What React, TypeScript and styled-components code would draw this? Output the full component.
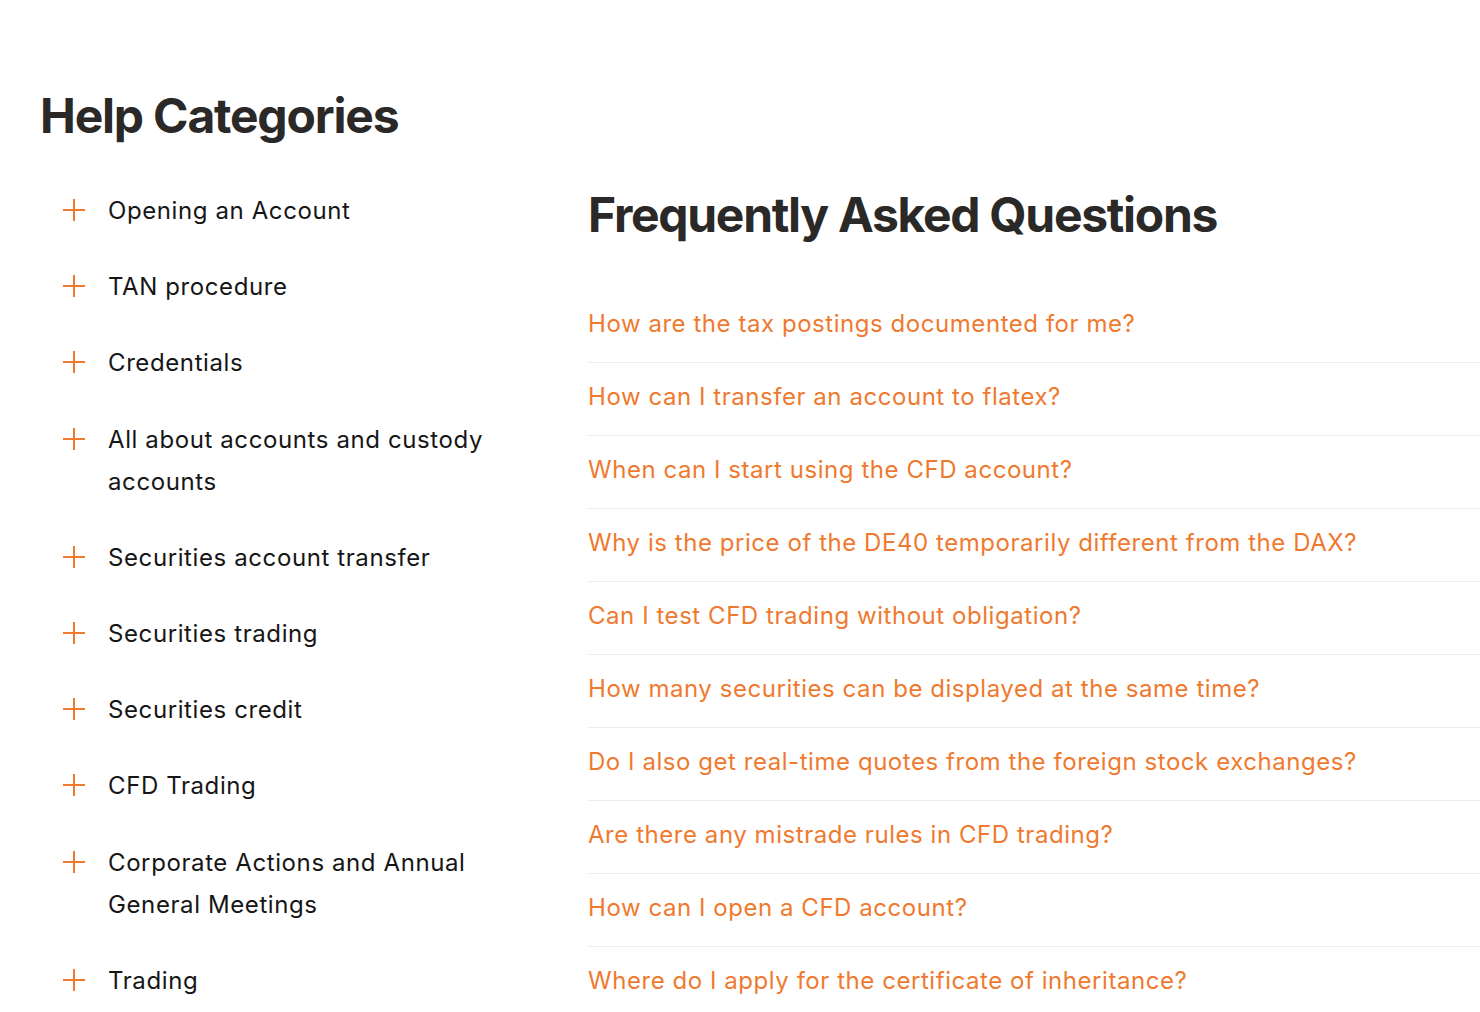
import React from 'react';
import styled, { createGlobalStyle } from 'styled-components';

const GlobalStyle = createGlobalStyle`
  html, body {
    margin: 0;
    padding: 0;
    background: #ffffff;
  }
  body {
    font-family: Inter, "Noto Sans", "Liberation Sans", sans-serif;
    -webkit-font-smoothing: antialiased;
  }
`;

const ORANGE = '#ef7a2f';

const Page = styled.div`
  width: 1480px;
  padding: 84px 0 0 40px;
  box-sizing: border-box;
  overflow: hidden;
`;

const PageTitle = styled.h1`
  margin: 0;
  font-size: 48px;
  line-height: 64px;
  font-weight: 700;
  color: #2b2927;
  letter-spacing: -1.2px;
`;

const Columns = styled.div`
  display: grid;
  grid-template-columns: 548px 1fr;
  margin-top: 40px;
`;

const CategoryList = styled.ul`
  list-style: none;
  margin: 0;
  padding: 2px 40px 0 22px;
  display: flex;
  flex-direction: column;
  gap: 34.2px;
`;

const CategoryItem = styled.li`
  display: flex;
  align-items: flex-start;
  gap: 22px;
  font-size: 24px;
  line-height: 42px;
  letter-spacing: 0.6px;
  color: #161616;
  cursor: pointer;

  & > span {
    max-width: 420px;
  }
`;

const PlusIcon = styled.svg`
  flex: none;
  width: 24px;
  height: 24px;
  margin-top: 8px;
`;

const FaqSection = styled.section`
  display: flex;
  flex-direction: column;
`;

const FaqTitle = styled.h2`
  margin: -3px 0 0;
  font-size: 48px;
  line-height: 60px;
  font-weight: 700;
  color: #2b2927;
  letter-spacing: -1.3px;
`;

const FaqList = styled.ul`
  list-style: none;
  margin: 45px 0 0;
  padding: 0;
`;

const FaqItem = styled.li<{ $last?: boolean }>`
  padding: 17px 0 21px;
  border-bottom: 1px solid ${(p) => (p.$last ? 'transparent' : '#ececec')};
`;

const FaqLink = styled.a`
  font-size: 24px;
  line-height: 34px;
  letter-spacing: 0.55px;
  color: ${ORANGE};
  text-decoration: none;
  cursor: pointer;
`;

const categories = [
  'Opening an Account',
  'TAN procedure',
  'Credentials',
  'All about accounts and custody accounts',
  'Securities account transfer',
  'Securities trading',
  'Securities credit',
  'CFD Trading',
  'Corporate Actions and Annual General Meetings',
  'Trading',
];

const questions = [
  'How are the tax postings documented for me?',
  'How can I transfer an account to flatex?',
  'When can I start using the CFD account?',
  'Why is the price of the DE40 temporarily different from the DAX?',
  'Can I test CFD trading without obligation?',
  'How many securities can be displayed at the same time?',
  'Do I also get real-time quotes from the foreign stock exchanges?',
  'Are there any mistrade rules in CFD trading?',
  'How can I open a CFD account?',
  'Where do I apply for the certificate of inheritance?',
];

const Plus = () => (
  <PlusIcon viewBox="0 0 24 24" fill="none" stroke={ORANGE} strokeWidth={2}>
    <path d="M12 1v22M1 12h22" />
  </PlusIcon>
);

const App = () => {
  return (
    <Page>
      <GlobalStyle />
      <PageTitle>Help Categories</PageTitle>
      <Columns>
        <CategoryList>
          {categories.map((c) => (
            <CategoryItem key={c}>
              <Plus />
              <span>{c}</span>
            </CategoryItem>
          ))}
        </CategoryList>
        <FaqSection>
          <FaqTitle>Frequently Asked Questions</FaqTitle>
          <FaqList>
            {questions.map((q, i) => (
              <FaqItem key={q} $last={i === questions.length - 1}>
                <FaqLink>{q}</FaqLink>
              </FaqItem>
            ))}
          </FaqList>
        </FaqSection>
      </Columns>
    </Page>
  );
};

export default App;
